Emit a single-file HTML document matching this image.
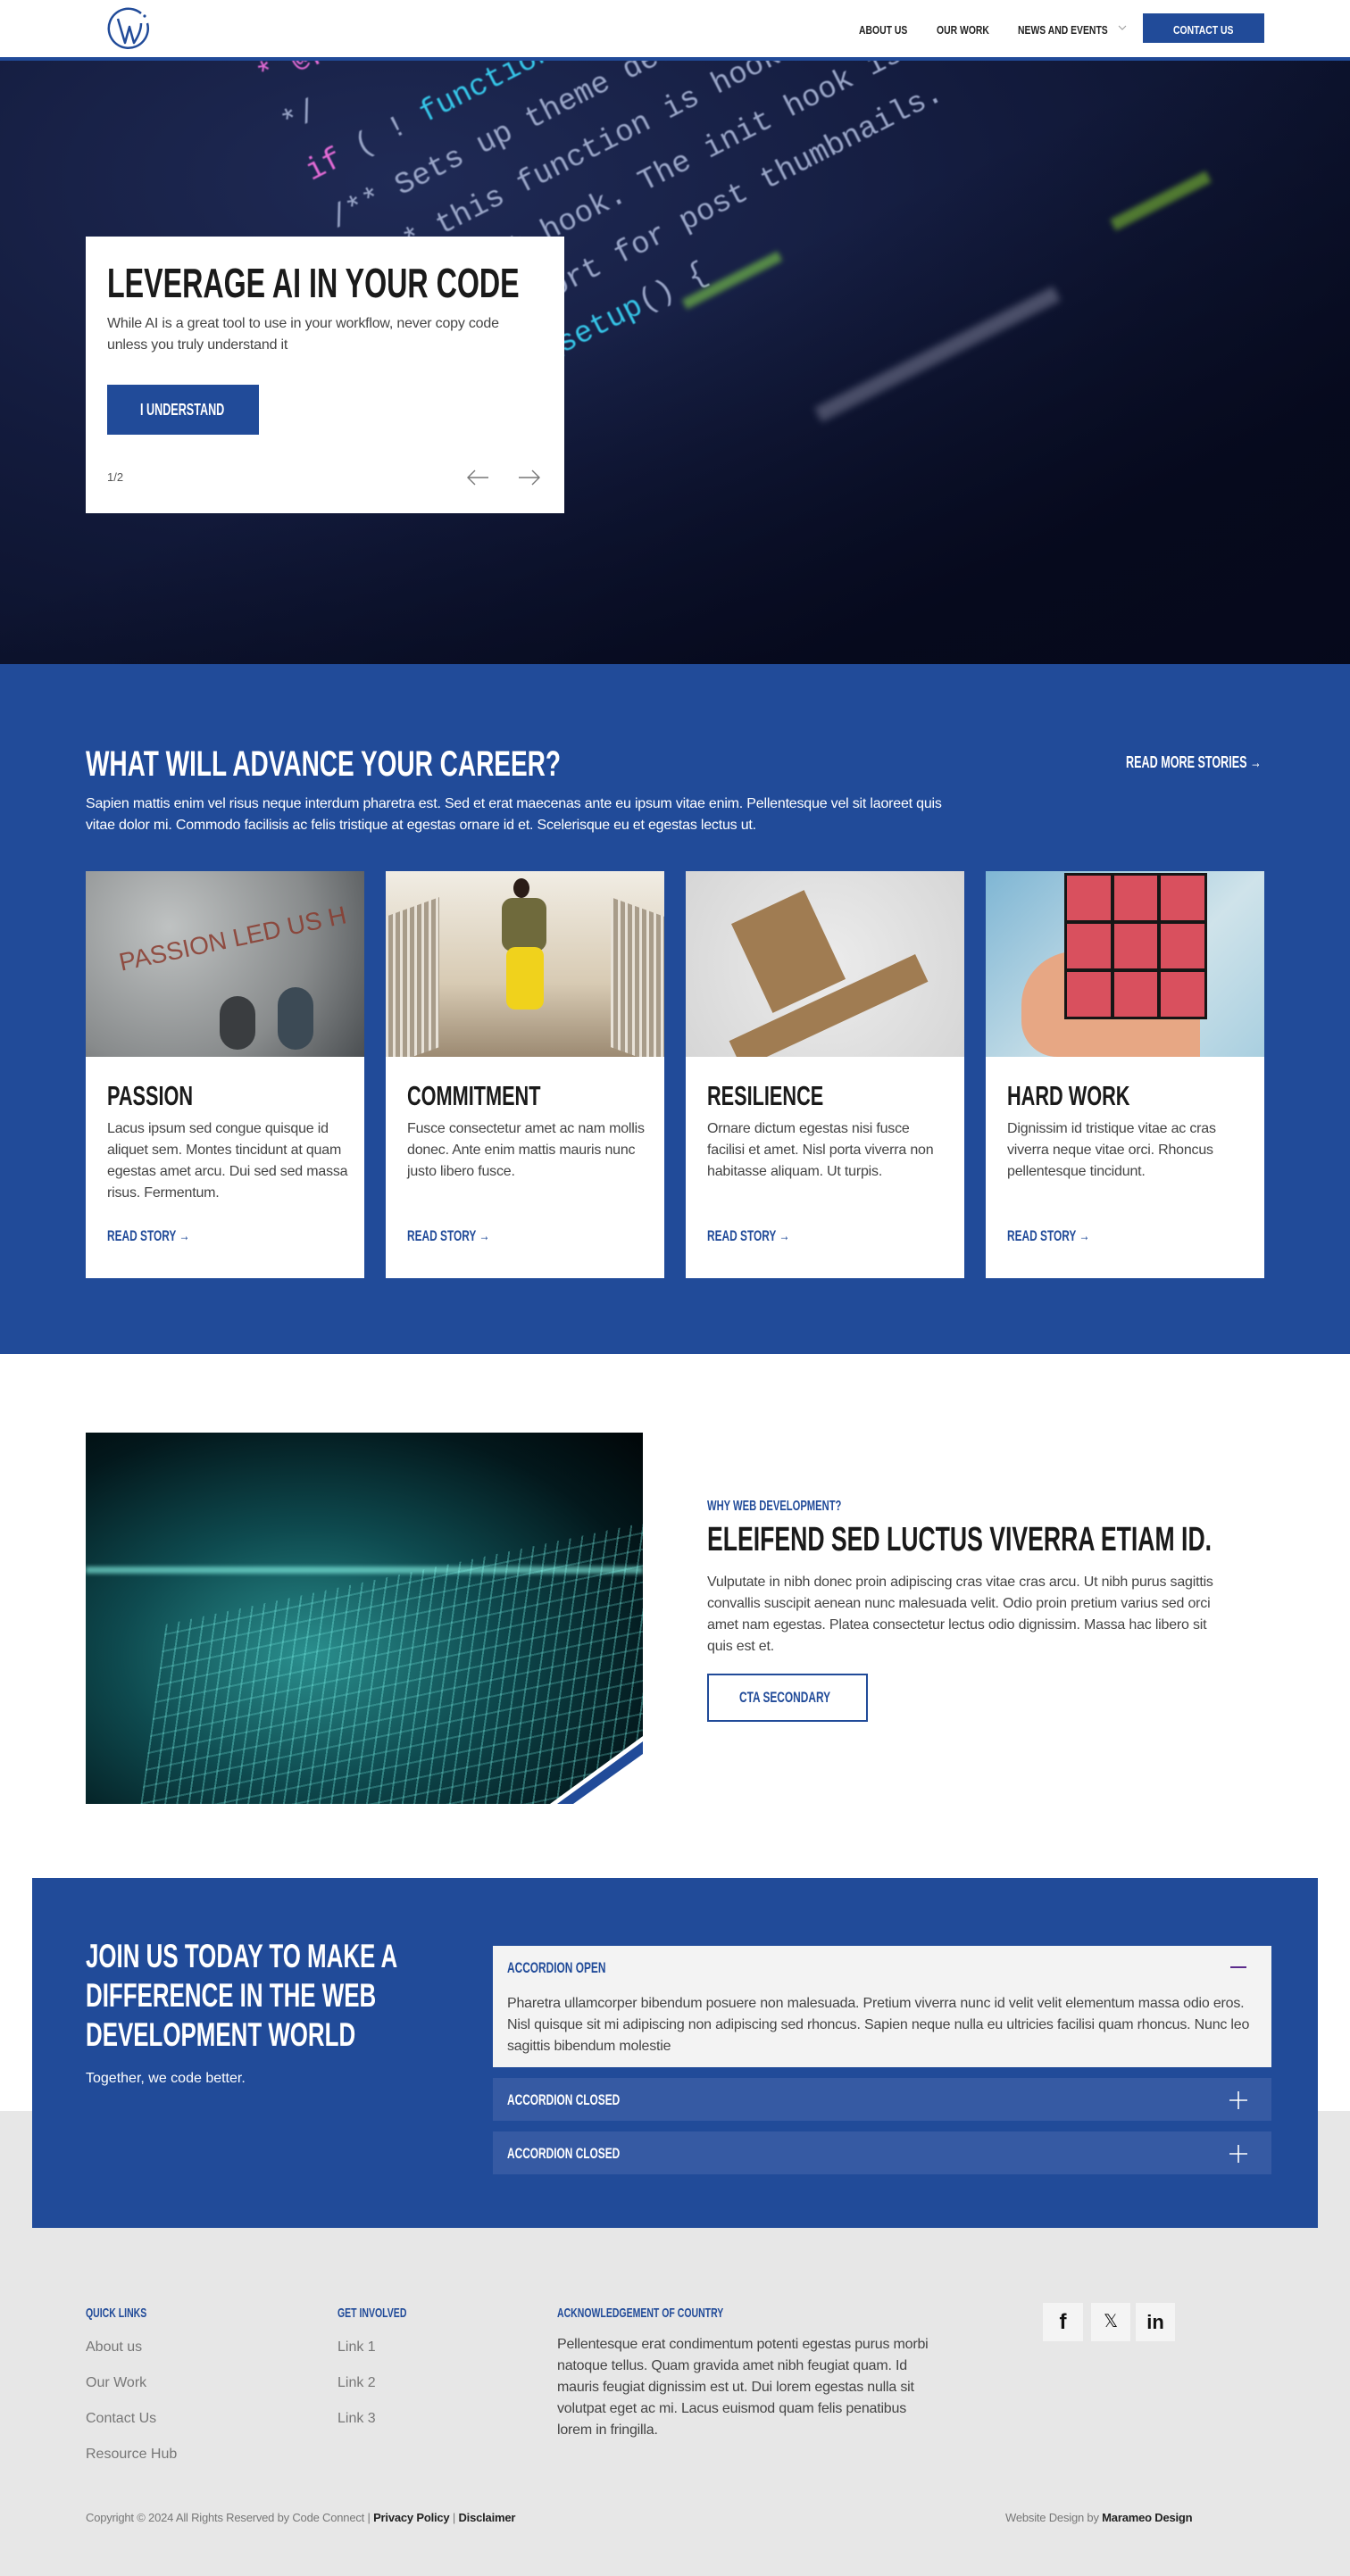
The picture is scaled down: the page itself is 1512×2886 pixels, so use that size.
<!DOCTYPE html>
<html><head><meta charset="utf-8">
<style>
*{margin:0;padding:0;box-sizing:border-box}
body{width:1512px;height:2886px;position:relative;background:#fff;font-family:"Liberation Sans",sans-serif;color:#333;overflow:hidden}
.a{position:absolute}
.c{font-family:"Liberation Sans",sans-serif;font-weight:bold;text-transform:uppercase;transform:scaleX(.7);transform-origin:0 0;white-space:nowrap}
.nav{font-size:13px;color:#222;top:26px;transform:scaleX(.8)}
p{font-size:16px;line-height:24px;letter-spacing:-0.2px}
.card{background:#fff;position:absolute;top:976px;width:312px;height:456px}
.card .img{height:208px;width:312px;overflow:hidden}
.card h3{position:absolute;left:24px;top:234px;font-size:31px;color:#1a1a1a}
.card p{position:absolute;left:24px;top:277px;width:270px;color:#444}
.card .rs{position:absolute;left:24px;top:399px;font-size:17px;color:#214b99}
.acc{position:absolute;left:552px;width:872px;background:#365aa3;height:48px}
.acc span{position:absolute;left:16px;top:15px;font-size:17px;color:#fff}
.fh{font-size:15px;color:#214b99;top:2583px}
.fl{font-size:16px;color:#777}
</style></head><body>

<!-- header -->
<div class="a" style="left:0;top:0;width:1512px;height:64px;background:#fff"></div>
<svg class="a" style="left:118px;top:6px" width="52" height="52" viewBox="0 0 52 52">
<path d="M40 9 A22 22 0 1 0 47 20" fill="none" stroke="#214b99" stroke-width="2.5"/>
<circle cx="44" cy="12" r="1.6" fill="#214b99"/>
<path d="M14 15 L22 42 L27 24 L32 42 Q40 30 40 20" fill="none" stroke="#214b99" stroke-width="2.5" stroke-linejoin="round"/>
</svg>
<div class="a c nav" style="left:962px">About us</div>
<div class="a c nav" style="left:1049px">Our Work</div>
<div class="a c nav" style="left:1140px">News and Events</div>
<svg class="a" style="left:1252px;top:28px" width="10" height="6"><path d="M1 1 L5 5 L9 1" fill="none" stroke="#999" stroke-width="1"/></svg>
<div class="a" style="left:1280px;top:15px;width:136px;height:33px;background:#214b99"></div>
<div class="a c nav" style="left:1314px;color:#fff">Contact us</div>
<div class="a" style="left:0;top:64px;width:1512px;height:4px;background:#214b99"></div>

<!-- hero -->
<div class="a" style="left:0;top:68px;width:1512px;height:676px;overflow:hidden;background:radial-gradient(ellipse at 30% 20%,#1f2a55 0%,#131b3d 45%,#080d22 100%)">
<div class="a" style="left:250px;top:-60px;width:1400px;height:900px;transform:rotate(-27deg);transform-origin:0 0;font-family:'Liberation Mono',monospace;font-size:34px;line-height:60px;color:#9aa6c8;filter:blur(0.6px);white-space:pre">
<span style="color:#e46bd6">* @package</span>
<span style="color:#9aa6c8">*/</span>
<span style="color:#e46bd6">if</span> ( ! <span style="color:#36c6e8">function_exists(</span> '<span style="color:#b5e35a">t</span>
<span>/** Sets up theme defaults and registers</span>
<span>   * this function is hooked into the after</span>
<span>   * init hook. The init hook is too late</span>
<span>   * support for post thumbnails.</span>
<span style="color:#36c6e8">starter_setup</span>() {
</div>
<div class="a" style="left:760px;top:240px;width:120px;height:12px;background:#7fd04a;opacity:.6;transform:rotate(-27deg);filter:blur(3px)"></div>
<div class="a" style="left:1240px;top:150px;width:120px;height:14px;background:#8fd83a;opacity:.7;transform:rotate(-27deg);filter:blur(3px)"></div>
<div class="a" style="left:900px;top:320px;width:300px;height:18px;background:#c9cbe6;opacity:.5;transform:rotate(-27deg);filter:blur(4px)"></div>
<div class="a" style="left:0;top:0;width:1512px;height:676px;background:linear-gradient(155deg,rgba(0,0,0,0) 45%,rgba(5,8,26,.85) 80%);"></div>
</div>
<div class="a" style="left:96px;top:265px;width:536px;height:310px;background:#fff"></div>
<div class="a c" style="left:120px;top:290px;font-size:46px;color:#1a1a1a">Leverage AI in your code</div>
<p class="a" style="left:120px;top:351px;width:488px;color:#444">While AI is a great tool to use in your workflow, never copy code unless you truly understand it</p>
<div class="a" style="left:120px;top:431px;width:170px;height:56px;background:#214b99"></div>
<div class="a c" style="left:157px;top:449px;font-size:18px;color:#fff">I understand</div>
<div class="a" style="left:120px;top:527px;font-size:13px;color:#555">1/2</div>
<svg class="a" style="left:522px;top:524px" width="26" height="22"><path d="M25 11 H2 M10 3 L2 11 L10 19" fill="none" stroke="#777" stroke-width="1.4"/></svg>
<svg class="a" style="left:580px;top:524px" width="26" height="22"><path d="M1 11 H24 M16 3 L24 11 L16 19" fill="none" stroke="#777" stroke-width="1.4"/></svg>

<!-- career section -->
<div class="a" style="left:0;top:744px;width:1512px;height:773px;background:#214b99"></div>
<div class="a c" style="left:96px;top:834px;font-size:40px;color:#fff">What will advance your career?</div>
<p class="a" style="left:96px;top:889px;width:985px;color:#fff">Sapien mattis enim vel risus neque interdum pharetra est. Sed et erat maecenas ante eu ipsum vitae enim. Pellentesque vel sit laoreet quis vitae dolor mi. Commodo facilisis ac felis tristique at egestas ornare id et. Scelerisque eu et egestas lectus ut.</p>
<div class="a c" style="left:1261px;top:844px;font-size:18px;color:#fff">Read more stories →</div>

<div class="card" style="left:96px"><div class="img" style="background:radial-gradient(circle at 30% 30%,#bfc2c2,#888b8c 60%,#4b4f52);position:relative"><div class="a" style="left:35px;top:60px;font-size:28px;color:#8a3b2e;transform:rotate(-12deg);font-family:'Liberation Sans';opacity:.85">PASSION LED US H</div><div class="a" style="left:150px;top:140px;width:40px;height:60px;background:#3a3d40;border-radius:20px"></div><div class="a" style="left:215px;top:130px;width:40px;height:70px;background:#3c4a55;border-radius:20px"></div></div>
<h3 class="c">Passion</h3><p>Lacus ipsum sed congue quisque id aliquet sem. Montes tincidunt at quam egestas amet arcu. Dui sed sed massa risus. Fermentum.</p><div class="rs c">Read story →</div></div>

<div class="card" style="left:432px"><div class="img" style="background:linear-gradient(180deg,#f1ede4,#d8cbb4 60%,#9c8a72);position:relative"><div class="a" style="left:0;top:40px;width:60px;height:168px;background:repeating-linear-gradient(90deg,#e8e2d8 0 3px,#a89c8a 3px 8px);transform:skewY(-20deg)"></div><div class="a" style="left:252px;top:40px;width:60px;height:168px;background:repeating-linear-gradient(90deg,#e8e2d8 0 3px,#a89c8a 3px 8px);transform:skewY(20deg)"></div><div class="a" style="left:130px;top:30px;width:50px;height:60px;background:#6f6a3c;border-radius:12px"></div><div class="a" style="left:135px;top:85px;width:42px;height:70px;background:#f0d21c;border-radius:10px"></div><div class="a" style="left:143px;top:8px;width:18px;height:22px;background:#2a1c16;border-radius:50%"></div></div>
<h3 class="c">Commitment</h3><p>Fusce consectetur amet ac nam mollis donec. Ante enim mattis mauris nunc justo libero fusce.</p><div class="rs c">Read story →</div></div>

<div class="card" style="left:768px"><div class="img" style="background:radial-gradient(circle at 50% 50%,#ececec,#d6d6d6);position:relative"><div class="a" style="left:70px;top:35px;width:90px;height:110px;background:#a07c52;transform:rotate(-25deg)"></div><div class="a" style="left:45px;top:140px;width:230px;height:34px;background:#a07c52;transform:rotate(-25deg)"></div></div>
<h3 class="c">Resilience</h3><p>Ornare dictum egestas nisi fusce facilisi et amet. Nisl porta viverra non habitasse aliquam. Ut turpis.</p><div class="rs c">Read story →</div></div>

<div class="card" style="left:1104px"><div class="img" style="background:linear-gradient(135deg,#7fb6d4,#cfe3ea 60%,#a9cfe0);position:relative"><div class="a" style="left:40px;top:90px;width:200px;height:118px;background:#e7a784;border-radius:60px 30px 0 40px"></div><div class="a" style="left:88px;top:2px;width:160px;height:164px;background:#161616;display:grid;grid-template-columns:repeat(3,1fr);gap:4px;padding:3px"><i style="background:#d9505e"></i><i style="background:#d9505e"></i><i style="background:#d9505e"></i><i style="background:#d9505e"></i><i style="background:#d9505e"></i><i style="background:#d9505e"></i><i style="background:#d9505e"></i><i style="background:#d9505e"></i><i style="background:#d9505e"></i></div></div>
<h3 class="c">Hard work</h3><p>Dignissim id tristique vitae ac cras viverra neque vitae orci. Rhoncus pellentesque tincidunt.</p><div class="rs c">Read story →</div></div>

<!-- web dev section -->
<div class="a" style="left:96px;top:1605px;width:624px;height:416px;overflow:hidden;background:radial-gradient(ellipse at 40% 60%,#2a8f8e 0%,#0e4a4f 40%,#03181c 75%,#010608 100%)">
<div class="a" style="left:60px;top:150px;width:700px;height:300px;background:repeating-linear-gradient(90deg,rgba(120,240,230,.35) 0 2px,transparent 2px 14px),repeating-linear-gradient(0deg,rgba(120,240,230,.25) 0 2px,transparent 2px 18px);transform:rotate(-12deg) skewX(-20deg)"></div>
<div class="a" style="left:0;top:150px;width:624px;height:8px;background:rgba(140,255,240,.6);filter:blur(2px)"></div>
<svg class="a" style="left:0;top:0" width="624" height="416"><polygon points="624,416 624,340 520,416" fill="#fff"/><polygon points="528,416 624,346 624,360 546,416" fill="#214b99"/></svg>
</div>
<div class="a c" style="left:792px;top:1679px;font-size:16px;color:#214b99">Why web development?</div>
<div class="a c" style="left:792px;top:1704px;font-size:38px;color:#1a1a1a">Eleifend sed luctus viverra etiam id.</div>
<p class="a" style="left:792px;top:1761px;width:592px;color:#444">Vulputate in nibh donec proin adipiscing cras vitae cras arcu. Ut nibh purus sagittis convallis suscipit aenean nunc malesuada velit. Odio proin pretium varius sed orci amet nam egestas. Platea consectetur lectus odio dignissim. Massa hac libero sit quis est et.</p>
<div class="a" style="left:792px;top:1875px;width:180px;height:54px;border:2px solid #214b99"></div>
<div class="a c" style="left:828px;top:1892px;font-size:17px;color:#214b99">CTA secondary</div>

<!-- join section -->
<div class="a" style="left:0;top:2365px;width:1512px;height:521px;background:#e7e7e7"></div>
<div class="a" style="left:36px;top:2104px;width:1440px;height:392px;background:#214b99"></div>
<div class="a c" style="left:96px;top:2170px;font-size:37px;line-height:44px;color:#fff">Join us today to make a<br>difference in the web<br>development world</div>
<div class="a" style="left:96px;top:2320px;font-size:16px;color:#fff">Together, we code better.</div>
<div class="a" style="left:552px;top:2180px;width:872px;height:136px;background:#f3f3f3"></div>
<div class="a c" style="left:568px;top:2195px;font-size:17px;color:#214b99">Accordion open</div>
<div class="a" style="left:1378px;top:2203px;width:18px;height:2px;background:#5b2b8c"></div>
<p class="a" style="left:568px;top:2233px;width:845px;color:#444">Pharetra ullamcorper bibendum posuere non malesuada. Pretium viverra nunc id velit velit elementum massa odio eros. Nisl quisque sit mi adipiscing non adipiscing sed rhoncus. Sapien neque nulla eu ultricies facilisi quam rhoncus. Nunc leo sagittis bibendum molestie</p>
<div class="acc" style="top:2328px"><span class="c">Accordion closed</span></div>
<div class="acc" style="top:2388px"><span class="c">Accordion closed</span></div>
<svg class="a" style="left:1377px;top:2343px" width="20" height="20"><path d="M10 0 V20 M0 10 H20" stroke="#fff" stroke-width="1.6"/></svg>
<svg class="a" style="left:1377px;top:2403px" width="20" height="20"><path d="M10 0 V20 M0 10 H20" stroke="#fff" stroke-width="1.6"/></svg>

<!-- footer -->
<div class="a c fh" style="left:96px">Quick links</div>
<div class="a c fh" style="left:378px">Get involved</div>
<div class="a c fh" style="left:624px">Acknowledgement of country</div>
<div class="a fl" style="left:96px;top:2621px">About us</div>
<div class="a fl" style="left:96px;top:2661px">Our Work</div>
<div class="a fl" style="left:96px;top:2701px">Contact Us</div>
<div class="a fl" style="left:96px;top:2741px">Resource Hub</div>
<div class="a fl" style="left:378px;top:2621px">Link 1</div>
<div class="a fl" style="left:378px;top:2661px">Link 2</div>
<div class="a fl" style="left:378px;top:2701px">Link 3</div>
<p class="a" style="left:624px;top:2615px;width:424px;color:#444">Pellentesque erat condimentum potenti egestas purus morbi natoque tellus. Quam gravida amet nibh feugiat quam. Id mauris feugiat dignissim est ut. Dui lorem egestas nulla sit volutpat eget ac mi. Lacus euismod quam felis penatibus lorem in fringilla.</p>
<div class="a" style="left:1168px;top:2580px;width:45px;height:43px;background:#f4f4f4;text-align:center;font:bold 24px/43px 'Liberation Sans';color:#111">f</div>
<div class="a" style="left:1222px;top:2580px;width:44px;height:43px;background:#f4f4f4;text-align:center;font:20px/43px 'Liberation Sans';color:#111">𝕏</div>
<div class="a" style="left:1272px;top:2580px;width:44px;height:43px;background:#f4f4f4;text-align:center;font:bold 22px/43px 'Liberation Sans';color:#111">in</div>
<div class="a" style="left:96px;top:2813px;font-size:13px;color:#777;letter-spacing:-0.2px">Copyright © 2024 All Rights Reserved by Code Connect | <b style="color:#222">Privacy Policy</b> | <b style="color:#222">Disclaimer</b></div>
<div class="a" style="left:1126px;top:2813px;font-size:13px;color:#777;letter-spacing:-0.2px">Website Design by <b style="color:#222">Marameo Design</b></div>
</body></html>
